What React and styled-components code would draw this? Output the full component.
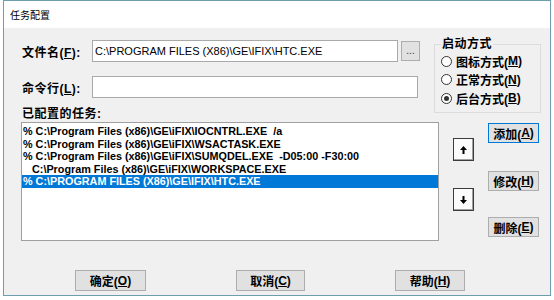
import React from 'react'
import styled, { createGlobalStyle } from 'styled-components'

const FONT = `"Liberation Sans", "Noto Sans CJK SC", sans-serif`

const GlobalStyle = createGlobalStyle`
  html, body {
    margin: 0;
    padding: 0;
    background: #ffffff;
  }
  body {
    font-family: ${FONT};
  }
`

const Window = styled.div`
  margin-left: 3px;
  width: 548px;
  height: 296px;
  box-sizing: border-box;
  border: 1px solid #6d9eab;
  display: flex;
  flex-direction: column;
  background: #f0f0f0;
`

const TitleBar = styled.div`
  height: 27px;
  flex: none;
  background: #ffffff;
  display: flex;
  align-items: center;
  padding-left: 6px;
  font-size: 10px;
  color: #000;
`

const Body = styled.div`
  flex: 1;
  padding: 0 0 0 17px;
  display: flex;
  flex-direction: column;
`

const TopSection = styled.div`
  display: flex;
  align-items: flex-start;
  padding-top: 10px;
  height: 84px;
`

const LeftColumn = styled.div`
  width: 399px;
  display: flex;
  flex-direction: column;
  padding-top: 2px;
`

const FieldRow = styled.div`
  display: flex;
  align-items: center;
  height: 22px;
  margin-top: ${({ $mt }) => $mt || 0}px;
`

const Label = styled.div`
  width: 71px;
  padding-left: 1px;
  box-sizing: border-box;
  flex: none;
  font-size: 12px;
  letter-spacing: 0.5px;
  font-weight: bold;
  color: #000;
  white-space: nowrap;
`

const TextBox = styled.div`
  width: ${({ $w }) => $w}px;
  height: 22px;
  box-sizing: border-box;
  border: 1px solid #a9a9a9;
  background: #ffffff;
  display: flex;
  align-items: center;
  padding-left: 2px;
  font-size: 11px;
  color: #000;
  white-space: nowrap;
  overflow: hidden;
`

const BrowseButton = styled.div`
  width: 19px;
  height: 20px;
  margin-left: 3px;
  box-sizing: border-box;
  border: 1px solid #adadad;
  background: #e1e1e1;
  display: flex;
  align-items: center;
  justify-content: center;
  font-size: 10px;
  color: #333;
  line-height: 1;
`

const SectionLabel = styled.div`
  margin-top: 8px;
  height: 16px;
  line-height: 16px;
  padding-left: 1px;
  font-size: 12px;
  letter-spacing: 0.5px;
  font-weight: bold;
  color: #000;
`

const GroupBox = styled.fieldset`
  margin: 0 0 0 14px;
  padding: 2px 0 0 6px;
  width: 107px;
  height: 75px;
  box-sizing: border-box;
  border: 1px solid #dcdcdc;
  display: flex;
  flex-direction: column;
`

const Legend = styled.legend`
  padding: 0 1px;
  margin-left: 0;
  font-size: 12px;
  letter-spacing: 0.5px;
  font-weight: bold;
  color: #000;
  line-height: 12px;
`

const RadioRow = styled.div`
  display: flex;
  align-items: center;
  height: 18.5px;
  font-size: 12px;
  font-weight: bold;
  color: #000;
  white-space: nowrap;
`

const RadioCircle = styled.span`
  width: 11px;
  height: 11px;
  box-sizing: border-box;
  border-radius: 50%;
  border: 1px solid #333;
  background: #fff;
  margin-right: 4px;
  display: flex;
  align-items: center;
  justify-content: center;
  &::after {
    content: '';
    width: 5px;
    height: 5px;
    border-radius: 50%;
    background: ${({ $checked }) => ($checked ? '#333' : 'transparent')};
  }
`

const Key = styled.span`
  text-decoration: underline;
`

const MiddleSection = styled.div`
  display: flex;
  align-items: flex-start;
  height: 119px;
`

const ListBox = styled.div`
  width: 418px;
  height: 119px;
  box-sizing: border-box;
  border: 1px solid #a0a0a0;
  background: #ffffff;
  padding-top: 2px;
  display: flex;
  flex-direction: column;
`

const ListRow = styled.div`
  height: 12.5px;
  line-height: 12.5px;
  padding-left: 1px;
  font-size: 10.8px;
  font-weight: bold;
  white-space: pre;
  color: ${({ $selected }) => ($selected ? '#ffffff' : '#000000')};
  background: ${({ $selected }) => ($selected ? '#0078d7' : 'transparent')};
`

const ArrowColumn = styled.div`
  margin-left: 14px;
  width: 21px;
  display: flex;
  flex-direction: column;
`

const ArrowButton = styled.div`
  width: 21px;
  height: 23px;
  margin-top: ${({ $mt }) => $mt}px;
  box-sizing: border-box;
  border: 1px solid #3c3c3c;
  background: #fbfbfb;
  box-shadow: inset -1px -1px 0 #a0a0a0;
  display: flex;
  align-items: center;
  justify-content: center;
`

const ButtonColumn = styled.div`
  margin-left: 14px;
  display: flex;
  flex-direction: column;
`

const Button = styled.div`
  width: ${({ $w }) => $w || 51}px;
  height: ${({ $h }) => $h || 20}px;
  margin-top: ${({ $mt }) => $mt || 0}px;
  box-sizing: border-box;
  border: 1px solid ${({ $default }) => ($default ? '#0078d7' : '#adadad')};
  background: #e1e1e1;
  display: flex;
  align-items: center;
  justify-content: center;
  font-size: 12px;
  font-weight: bold;
  color: #000;
  white-space: nowrap;
`

const BottomSection = styled.div`
  display: flex;
  margin-top: 29px;
  padding-left: 54px;
  gap: 90px;
`

const Arrow = ({ down }) => (
  <svg width="7" height="8" viewBox="0 0 7 8" style={{ transform: down ? 'rotate(180deg)' : 'none' }}>
    <path d="M3.5 0 L7 4 L4.5 4 L4.5 8 L2.5 8 L2.5 4 L0 4 Z" fill="#000" />
  </svg>
)

const tasks = [
  '% C:\\Program Files (x86)\\GE\\iFIX\\IOCNTRL.EXE  /a',
  '% C:\\Program Files (x86)\\GE\\iFIX\\WSACTASK.EXE',
  '% C:\\Program Files (x86)\\GE\\iFIX\\SUMQDEL.EXE  -D05:00 -F30:00',
  '   C:\\Program Files (x86)\\GE\\iFIX\\WORKSPACE.EXE',
  '% C:\\PROGRAM FILES (X86)\\GE\\IFIX\\HTC.EXE',
]

const App = () => (
  <>
    <GlobalStyle />
    <Window>
      <TitleBar>任务配置</TitleBar>
      <Body>
        <TopSection>
          <LeftColumn>
            <FieldRow>
              <Label>文件名(<Key>F</Key>):</Label>
              <TextBox $w={306}>C:\PROGRAM FILES (X86)\GE\IFIX\HTC.EXE</TextBox>
              <BrowseButton>...</BrowseButton>
            </FieldRow>
            <FieldRow $mt={14}>
              <Label>命令行(<Key>L</Key>):</Label>
              <TextBox $w={326} />
            </FieldRow>
            <SectionLabel>已配置的任务:</SectionLabel>
          </LeftColumn>
          <GroupBox>
            <Legend>启动方式</Legend>
            <RadioRow>
              <RadioCircle />
              图标方式(<Key>M</Key>)
            </RadioRow>
            <RadioRow>
              <RadioCircle />
              正常方式(<Key>N</Key>)
            </RadioRow>
            <RadioRow>
              <RadioCircle $checked />
              后台方式(<Key>B</Key>)
            </RadioRow>
          </GroupBox>
        </TopSection>
        <MiddleSection>
          <ListBox>
            {tasks.map((t, i) => (
              <ListRow key={i} $selected={i === tasks.length - 1}>
                {t}
              </ListRow>
            ))}
          </ListBox>
          <ArrowColumn>
            <ArrowButton $mt={16}>
              <Arrow />
            </ArrowButton>
            <ArrowButton $mt={27}>
              <Arrow down />
            </ArrowButton>
          </ArrowColumn>
          <ButtonColumn>
            <Button $default $mt={1}>添加(<Key>A</Key>)</Button>
            <Button $mt={28}>修改(<Key>H</Key>)</Button>
            <Button $mt={26}>删除(<Key>E</Key>)</Button>
          </ButtonColumn>
        </MiddleSection>
        <BottomSection>
          <Button $w={71} $h={21}>确定(<Key>O</Key>)</Button>
          <Button $w={69} $h={21}>取消(<Key>C</Key>)</Button>
          <Button $w={70} $h={21}>帮助(<Key>H</Key>)</Button>
        </BottomSection>
      </Body>
    </Window>
  </>
)

export default App
